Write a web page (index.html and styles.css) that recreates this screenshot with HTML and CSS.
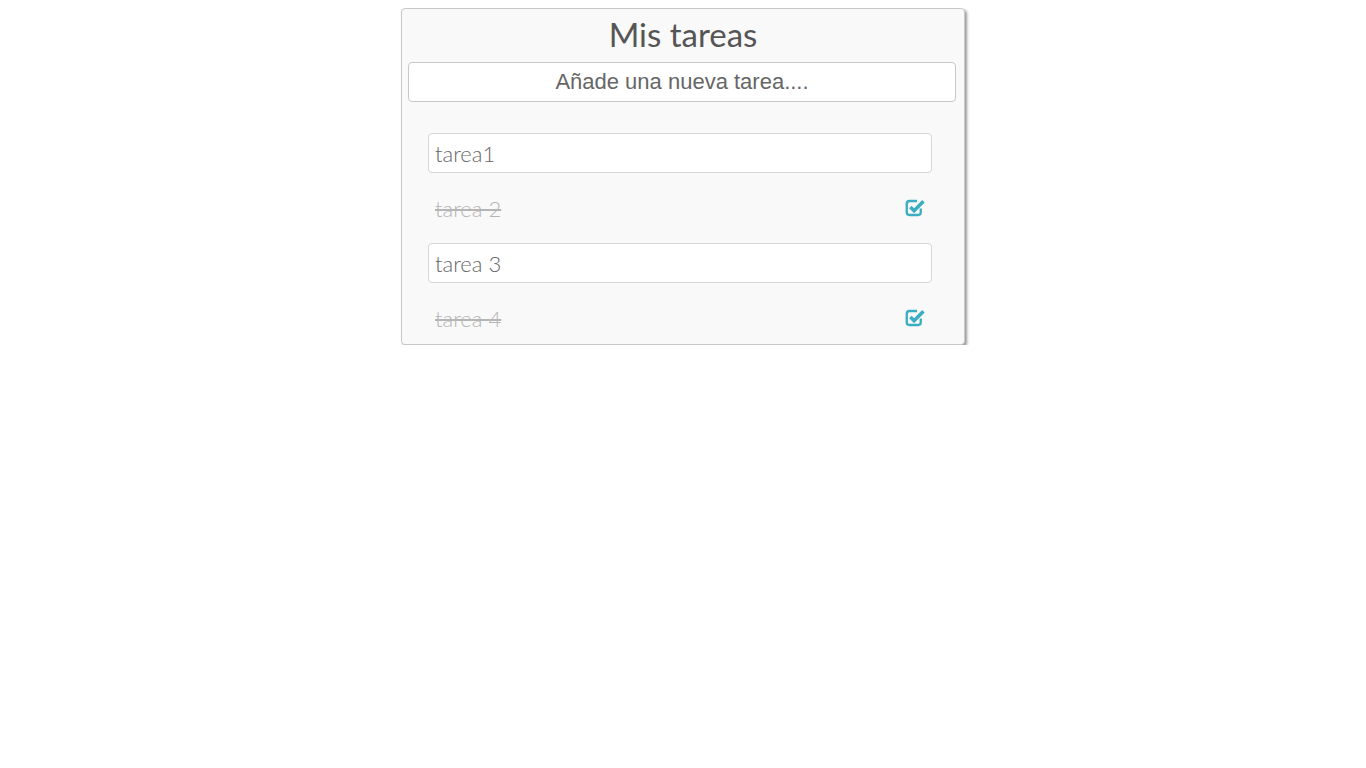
FILE: index.html
```html
<!DOCTYPE html>
<html lang="es">
<head>
<meta charset="utf-8">
<title>Mis tareas</title>
<link rel="stylesheet" href="styles.css">
</head>
<body>
<section class="card">
  <h1 class="title">Mis tareas</h1>
  <input class="new-task" type="text" placeholder="Añade una nueva tarea....">
  <ul class="tasks">
    <li class="task"><input class="task-edit" type="text" value="tarea1"></li>
    <li class="task done"><span class="task-text">tarea 2</span>
      <svg class="check" viewBox="0 0 18 17" width="21" height="20"><path d="M13.5 9v3.2a2.3 2.3 0 0 1-2.3 2.3H3.8a2.3 2.3 0 0 1-2.3-2.3V4.8a2.3 2.3 0 0 1 2.3-2.3h6.5" fill="none" stroke="#39aec1" stroke-width="2"/><path d="M4.6 7.6l3.2 3.2 8-8" fill="none" stroke="#39aec1" stroke-width="3"/></svg>
    </li>
    <li class="task"><input class="task-edit" type="text" value="tarea 3"></li>
    <li class="task done"><span class="task-text">tarea 4</span>
      <svg class="check" viewBox="0 0 18 17" width="21" height="20"><path d="M13.5 9v3.2a2.3 2.3 0 0 1-2.3 2.3H3.8a2.3 2.3 0 0 1-2.3-2.3V4.8a2.3 2.3 0 0 1 2.3-2.3h6.5" fill="none" stroke="#39aec1" stroke-width="2"/><path d="M4.6 7.6l3.2 3.2 8-8" fill="none" stroke="#39aec1" stroke-width="3"/></svg>
    </li>
  </ul>
</section>
</body>
</html>
```
FILE: styles.css
```css
body {
  margin: 8px;
  background: #fff;
  font-family: "Lato", "Open Sans", sans-serif;
}
.card {
  width: 562px;
  margin: 0 auto;
  background: #f9f9f9;
  border: 1px solid #c8c8c8;
  border-radius: 4px;
  box-shadow: 2px 2px 3px rgba(0,0,0,0.4);
  padding: 0 0 6px 0;
}
.title {
  margin: 0;
  text-align: center;
  font-family: "Lato", sans-serif;
  font-weight: 400;
  font-size: 33px;
  line-height: 51px;
  height: 53px;
  color: #555;
}
.new-task {
  display: block;
  box-sizing: border-box;
  width: 548px;
  height: 40px;
  margin: 0 0 0 6px;
  border: 1px solid #c8c8c8;
  border-radius: 4px;
  background: #fff;
  font-family: "Liberation Sans", Arial, sans-serif;
  font-size: 22px;
  text-align: center;
  color: #666;
  outline: none;
}
.new-task::placeholder {
  color: #666;
  opacity: 1;
}
.tasks {
  list-style: none;
  margin: 31px 32px 0 26px;
  padding: 0;
  display: flex;
  flex-direction: column;
  gap: 15px;
}
.task {
  height: 40px;
  display: flex;
  align-items: center;
  justify-content: space-between;
}
.task-edit {
  box-sizing: border-box;
  width: 100%;
  height: 40px;
  border: 1px solid #d6d6d6;
  border-radius: 4px;
  background: #fff;
  padding: 0 6px;
  font-family: "Lato", sans-serif;
  font-weight: 300;
  font-size: 22px;
  color: #666;
  outline: none;
}
.task-text {
  padding-left: 7px;
  font-weight: 300;
  font-size: 22px;
  color: #b5b5b5;
  text-decoration: line-through;
}
.check {
  margin-right: 6px;
  display: block;
}
```
